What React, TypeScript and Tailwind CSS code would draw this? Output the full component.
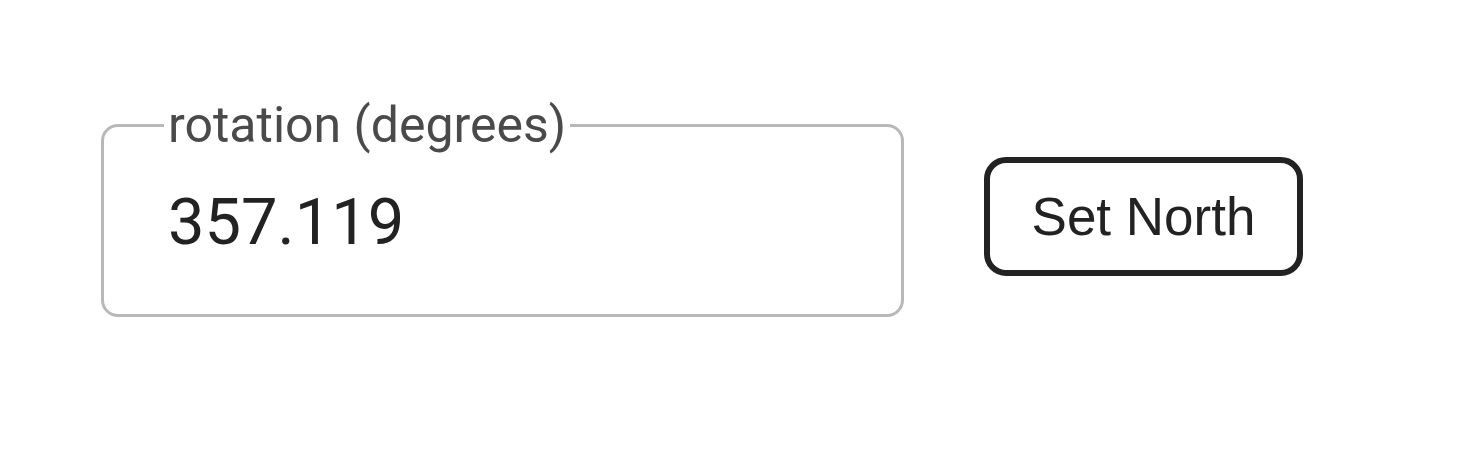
import React, { useState } from "react";

const App = () => {
  const [rotation, setRotation] = useState<string>("357.119");

  return (
    <div className="w-[1472px] h-[452px] bg-white flex items-start pl-[101px] pt-[102px]">
      <fieldset className="w-[803px] h-[215px] border-[3px] border-[#b8b8b8] rounded-[17px] pl-[64px] pr-6">
        <legend className="-ml-[4px] px-[4px] text-[50px] leading-[0.92] text-[#4a4a4a] font-['Roboto',sans-serif]">
          rotation (degrees)
        </legend>
        <input
          className="mt-[36px] w-full block bg-transparent text-[65px] leading-none text-[#222] font-['Roboto',sans-serif] focus:outline-none"
          type="text"
          value={rotation}
          onChange={(e) => setRotation(e.target.value)}
        />
      </fieldset>
      <button
        className="ml-[80px] mt-[55px] w-[319px] h-[119px] border-[6px] border-[#222] rounded-[22px] bg-white text-[53px] text-[#222] font-['Liberation_Sans',Arial,sans-serif]"
        onClick={() => setRotation("0")}
      >
        Set North
      </button>
    </div>
  );
};

export default App;
